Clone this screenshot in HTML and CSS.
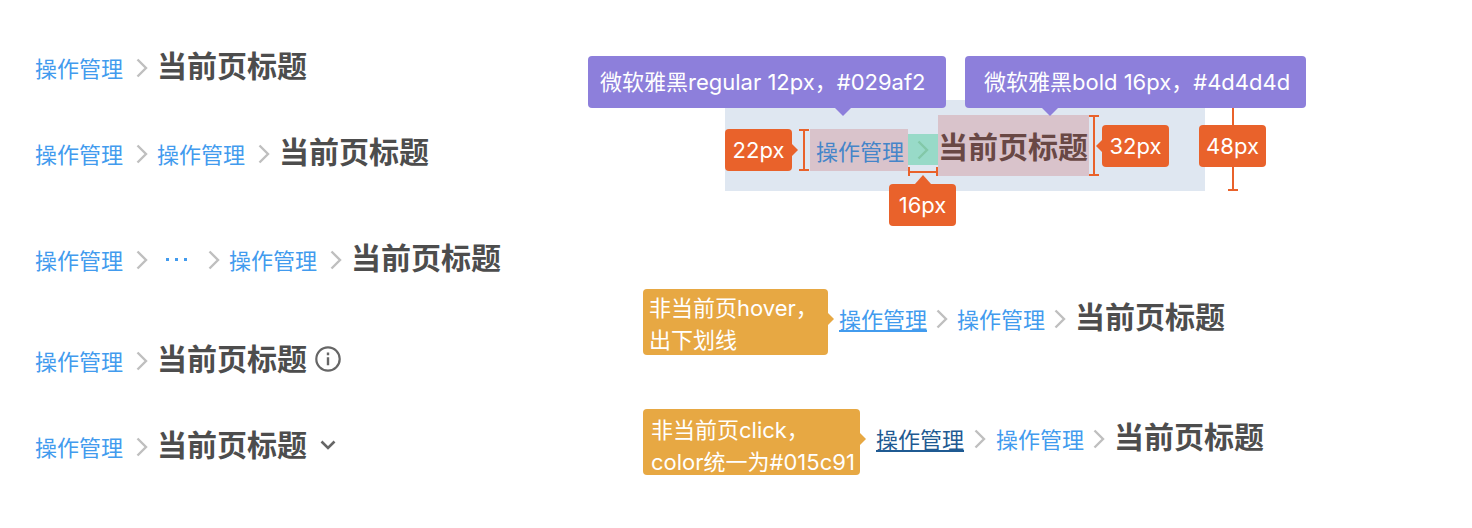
FILE: index.html
```
<!DOCTYPE html>
<html lang="zh-CN">
<head>
<meta charset="utf-8">
<title>面包屑</title>
<link rel="stylesheet" href="styles.css">
</head>
<body>
<svg class="sprite" aria-hidden="true">
  <symbol id="chevron" viewBox="0 0 12 20"><path d="M1.500 1.500 10 10l-8.500 8.500" fill="none" stroke="currentColor" stroke-width="2.400"/></symbol>
  <symbol id="info" viewBox="0 0 26 26"><circle cx="13" cy="13" r="11.700" fill="none" stroke="currentColor" stroke-width="2.200"/><path d="M13 6.500v2.800M13 11.200v8" fill="none" stroke="currentColor" stroke-width="2.400"/></symbol>
  <symbol id="down" viewBox="0 0 16 10"><path d="m1.500 1.500 6.500 6.500 6.500-6.500" fill="none" stroke="currentColor" stroke-width="2.600"/></symbol>
</svg>
<main class="page">
  <section class="types">
    <nav class="crumbs" aria-label="两级">
      <a class="link" href="#">操作管理</a><span class="sep"><svg><use href="#chevron"/></svg></span><span class="title">当前页标题</span>
    </nav>
    <nav class="crumbs" aria-label="三级">
      <a class="link" href="#">操作管理</a><span class="sep"><svg><use href="#chevron"/></svg></span><a class="link" href="#">操作管理</a><span class="sep"><svg><use href="#chevron"/></svg></span><span class="title">当前页标题</span>
    </nav>
    <nav class="crumbs crumbs-far" aria-label="折叠">
      <a class="link" href="#">操作管理</a><span class="sep"><svg><use href="#chevron"/></svg></span><button class="more" type="button" aria-label="更多"><i></i><i></i><i></i></button><span class="sep"><svg><use href="#chevron"/></svg></span><a class="link" href="#">操作管理</a><span class="sep"><svg><use href="#chevron"/></svg></span><span class="title">当前页标题</span>
    </nav>
    <nav class="crumbs crumbs-mid" aria-label="带说明">
      <a class="link" href="#">操作管理</a><span class="sep"><svg><use href="#chevron"/></svg></span><span class="title">当前页标题</span><button class="icon-btn info" type="button" aria-label="说明"><svg><use href="#info"/></svg></button>
    </nav>
    <nav class="crumbs" aria-label="带下拉">
      <a class="link" href="#">操作管理</a><span class="sep"><svg><use href="#chevron"/></svg></span><span class="title">当前页标题</span><button class="icon-btn down" type="button" aria-label="展开"><svg><use href="#down"/></svg></button>
    </nav>
  </section>

  <section class="specs">
    <div class="callouts">
      <div class="callout callout-link">微软雅黑regular 12px，#029af2</div>
      <div class="callout callout-title">微软雅黑bold 16px，#4d4d4d</div>
    </div>
    <div class="measure">
      <div class="band">
        <span class="size size-right low">22px</span>
        <span class="bracket bracket-link low"></span>
        <a class="link box-link low" href="#">操作管理</a>
        <span class="sep box-sep low"><svg><use href="#chevron"/></svg>
          <span class="gap-mark"><span class="gap-bracket"></span><span class="size size-up">16px</span></span>
        </span>
        <span class="title box-title">当前页标题</span>
        <span class="bracket bracket-title"></span>
        <span class="size size-left">32px</span>
      </div>
      <div class="height-mark"><span class="bracket bracket-band"></span><span class="size size-over">48px</span></div>
    </div>
    <div class="state">
      <p class="note">非当前页hover，<br>出下划线</p>
      <nav class="crumbs tight" aria-label="悬停">
        <a class="link hovered" href="#">操作管理</a><span class="sep"><svg><use href="#chevron"/></svg></span><a class="link" href="#">操作管理</a><span class="sep"><svg><use href="#chevron"/></svg></span><span class="title">当前页标题</span>
      </nav>
    </div>
    <div class="state state-click">
      <p class="note">非当前页click，<br>color统一为#015c91</p>
      <nav class="crumbs tight" aria-label="点击">
        <a class="link pressed" href="#">操作管理</a><span class="sep"><svg><use href="#chevron"/></svg></span><a class="link" href="#">操作管理</a><span class="sep"><svg><use href="#chevron"/></svg></span><span class="title">当前页标题</span>
      </nav>
    </div>
  </section>
</main>
</body>
</html>
```

FILE: styles.css
```
* { box-sizing: border-box; }

:root {
  --blue: #429bee;
  --red: #e9622b;
  --purple: #8d7fdb;
  --amber: #e7a843;
}

body {
  margin: 0;
  background: #fff;
  color: #4d4d4d;
  font-family: Inter, "Noto Sans CJK SC", sans-serif;
  font-size: 22px;
}

.sprite { position: absolute; width: 0; height: 0; }

.page {
  display: grid;
  grid-template-columns: 608fr 795fr;
  padding: 44px 34px 44px 35px;
}

/* Breadcrumb */
.crumbs {
  display: flex;
  align-items: center;
  height: 44px;
  white-space: nowrap;
}
.types .crumbs + .crumbs { margin-top: 42px; }
.types .crumbs + .crumbs-far { margin-top: 62px; }
.types .crumbs + .crumbs-mid { margin-top: 57px; }

.link {
  padding-top: 2px;
  color: var(--blue);
  font-family: "Noto Sans CJK SC", sans-serif;
  font-size: 22px;
  line-height: 32px;
  text-decoration: none;
}
.hovered, .pressed {
  text-decoration: underline;
  text-decoration-thickness: 2px;
  text-underline-offset: 2px;
}
.pressed { color: #1f5a92; }

.sep {
  display: flex;
  justify-content: center;
  width: 34px;
  padding: 4px 0 0 4px;
  color: #bfbfbf;
}
.sep svg { width: 12px; height: 20px; }
.tight .sep { width: 30px; padding-left: 0; }
.state-click .pressed + .sep { width: 32px; }

.title {
  margin-top: -4px;
  font-family: "Noto Sans CJK SC", sans-serif;
  font-size: 30px;
  font-weight: 700;
  line-height: 44px;
}

button {
  display: flex;
  align-items: center;
  justify-content: center;
  padding: 0;
  border: 0;
  background: none;
  color: #666;
}
.more { gap: 6px; width: 38px; height: 32px; padding-top: 2px; }
.more i { width: 3px; height: 3px; background: var(--blue); }
.icon-btn { margin-left: 8px; }
.info svg { width: 26px; height: 26px; }
.down svg { width: 16px; height: 10px; }
.down { margin-left: 13px; }

/* Text style callouts */
.callouts {
  position: relative;
  z-index: 1;
  display: flex;
  gap: 19px;
  margin: 12px 0 -8px -55px;
}
.callout {
  position: relative;
  width: 358px;
  padding: 0 12px;
  border-radius: 4px;
  background: var(--purple);
  color: #fff;
  line-height: 52px;
  white-space: nowrap;
}
.callout-title { width: 341px; padding-left: 19px; }
.callout::after {
  content: "";
  position: absolute;
  top: 100%;
  left: 247px;
  border: 8px solid transparent;
  border-top-color: var(--purple);
  border-bottom: 0;
}
.callout-title::after { left: 77px; }

/* Measured breadcrumb */
.measure { display: flex; margin-left: 82px; }
.band {
  display: flex;
  align-items: center;
  width: 480px;
  padding: 15px 0;
  background: #dfe7f1;
  white-space: nowrap;
}
.low { margin-top: 8px; }
.box-link {
  padding: 0 4px 0 6px;
  background: #d9c3cb;
  color: #4585c9;
  line-height: 42px;
}
.box-sep {
  position: relative;
  align-items: center;
  width: 30px;
  height: 31px;
  padding: 0;
  background: #98dac8;
  color: #83c8a8;
}
.box-title {
  width: 151px;
  margin-top: 0;
  background: #d9c3cb;
  color: #694845;
  line-height: 61px;
}

.size {
  position: relative;
  flex: none;
  width: 67px;
  border-radius: 4px;
  background: var(--red);
  color: #fff;
  line-height: 42px;
  text-align: center;
}
.size::before { position: absolute; border: 6px solid transparent; }
.size-right::before { content: ""; top: 15px; left: 100%; border-left-color: var(--red); border-right: 0; }
.size-left { margin-left: 3px; }
.size-left::before { content: ""; top: 15px; right: 100%; border-right-color: var(--red); border-left: 0; }
.size-up::before { content: ""; bottom: 100%; left: 26px; border-width: 0 8px 9px; border-bottom-color: var(--red); }

.bracket {
  flex: none;
  width: 10px;
  border: solid var(--red);
  border-width: 2px 0;
  background: linear-gradient(var(--red), var(--red)) center / 2px 100% no-repeat;
}
.bracket-link { height: 42px; margin-right: 1px; margin-left: 7px; }
.bracket-title { height: 61px; }
.gap-mark {
  position: absolute;
  top: 33px;
  left: -19px;
  display: flex;
  flex-direction: column;
  align-items: center;
  gap: 8px;
}
.gap-bracket {
  width: 30px;
  height: 9px;
  border: solid var(--red);
  border-width: 0 2px;
  background: linear-gradient(var(--red), var(--red)) center / 100% 2px no-repeat;
}
.height-mark {
  position: relative;
  display: flex;
  margin-left: 23px;
}
.size-over { position: absolute; top: 25px; left: -29px; }

/* Link states */
.state {
  display: flex;
  align-items: flex-start;
  margin-top: 98px;
}
.state-click { margin-top: 54px; }
.note {
  position: relative;
  width: 185px;
  height: 66px;
  margin: 0;
  padding: 3px 6px 0;
  border-radius: 4px;
  background: var(--amber);
  color: #fff;
  line-height: 32px;
  white-space: nowrap;
}
.state-click .note { width: 217px; padding: 5px 8px 0; }
.note::after {
  content: "";
  position: absolute;
  top: 24px;
  left: 100%;
  border: 6px solid transparent;
  border-left-color: var(--amber);
  border-right: 0;
}
.state .crumbs { margin: 6px 0 0 11px; }
.state-click .crumbs { margin-left: 16px; }
```
